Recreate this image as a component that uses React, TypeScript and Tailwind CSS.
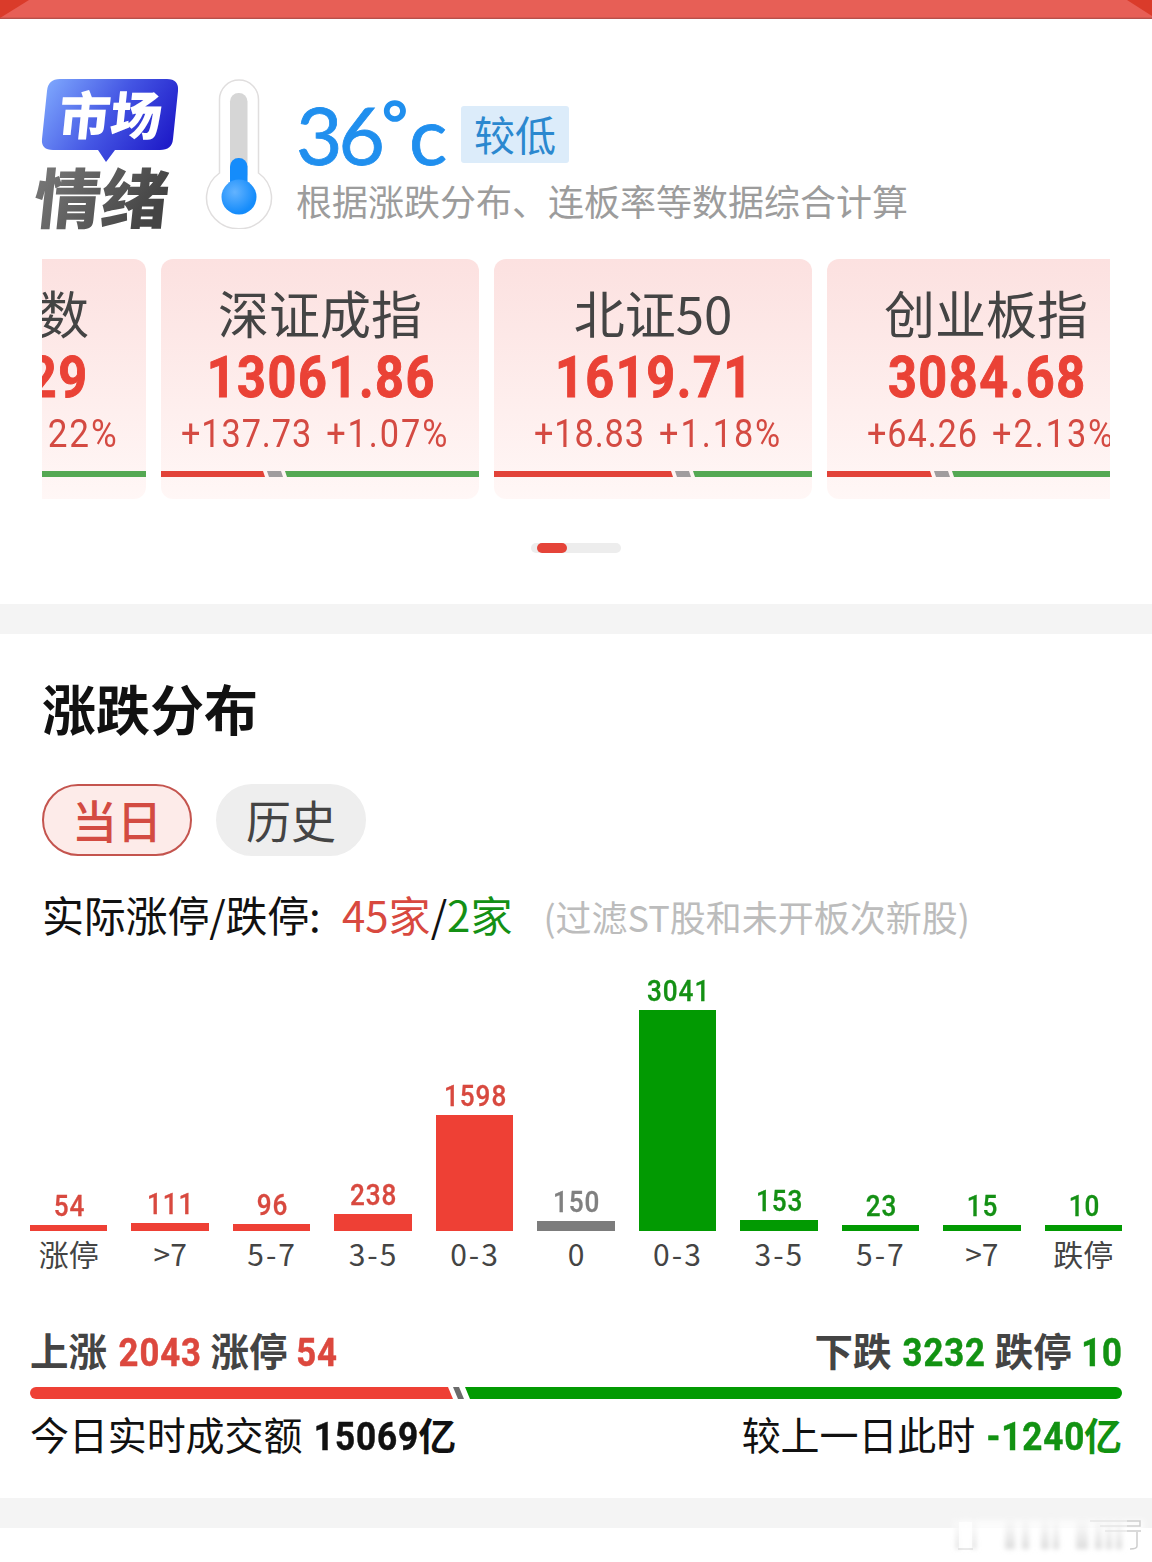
import React, { useState } from 'react';

interface IndexItem {
  name: string;
  price: string;
  change: string;
  percent: string;
  offset: string;
  red: number;
}

interface Bucket {
  label: string;
  count: number;
  height: number;
  type: 'up' | 'flat' | 'down';
}

const indexes: IndexItem[] = [
  { name: '深证成指', price: '13061.86', change: '+137.73', percent: '+1.07%', offset: 'pl-[20px]', red: 104 },
  { name: '北证50', price: '1619.71', change: '+18.83', percent: '+1.18%', offset: 'pl-[40px]', red: 179 },
  { name: '创业板指', price: '3084.68', change: '+64.26', percent: '+2.13%', offset: 'pl-[40px]', red: 105 },
];

const buckets: Bucket[] = [
  { label: '涨停', count: 54, height: 6, type: 'up' },
  { label: '>7', count: 111, height: 8, type: 'up' },
  { label: '5-7', count: 96, height: 7, type: 'up' },
  { label: '3-5', count: 238, height: 17, type: 'up' },
  { label: '0-3', count: 1598, height: 116, type: 'up' },
  { label: '0', count: 150, height: 10, type: 'flat' },
  { label: '0-3', count: 3041, height: 221, type: 'down' },
  { label: '3-5', count: 153, height: 11, type: 'down' },
  { label: '5-7', count: 23, height: 6, type: 'down' },
  { label: '>7', count: 15, height: 6, type: 'down' },
  { label: '跌停', count: 10, height: 6, type: 'down' },
];

const cardClass =
  'h-[240px] shrink-0 overflow-hidden bg-linear-to-b from-[#fce1e0] to-[#fff7f6] flex flex-col';

// Roboto squeezed to the proportions of a DIN face
const priceClass =
  'mt-[6px] h-[60px] font-[Roboto,sans-serif] text-[57.5px] leading-[60px] font-bold tracking-[1.8px] text-[#ea4236] [-webkit-text-stroke:1px_#ea4236]';
const changeClass =
  'mt-px h-[50px] font-[Roboto,sans-serif] text-[39px] leading-[51px] font-normal tracking-[1px] text-[#d44a42]';

const Banner: React.FC = () => (
  <svg className="block h-[19px] w-full" viewBox="0 0 1152 19">
    <rect width="1152" height="19" fill="#e75f56" />
    <path d="M0 0H29L0 18Z" fill="#da3b2a" />
    <path d="M1152 0H1127L1152 16Z" fill="#da3b2a" />
    <rect y="17.6" width="1152" height="1.4" fill="#b8504a" />
  </svg>
);

const Logo: React.FC = () => (
  <svg className="h-[150px] w-[150px] shrink-0 overflow-visible" viewBox="0 0 150 150">
    <defs>
      <linearGradient id="bubble" x1="0" y1="0.2" x2="1" y2="0.6">
        <stop offset="0" stopColor="#7ba3fc" />
        <stop offset="0.5" stopColor="#4557e4" />
        <stop offset="1" stopColor="#1f1cc9" />
      </linearGradient>
      <linearGradient id="ink" x1="0" y1="0" x2="1" y2="0.4">
        <stop offset="0" stopColor="#7d7d7d" />
        <stop offset="1" stopColor="#444444" />
      </linearGradient>
    </defs>
    <path
      d="M30 0H137Q149 0 148 12L143 60Q142 71 130 71H85L76 83L68 71H23Q11 71 12 60L17 12Q18 0 30 0Z"
      fill="url(#bubble)"
    />
    <g className="font-['Noto_Sans_CJK_SC',sans-serif] font-black">
      <text transform="translate(27 56) skewX(-6)" fontSize="52" fill="#fff" textLength="103" lengthAdjust="spacingAndGlyphs">市场</text>
      <text transform="translate(2 144) skewX(-6)" fontSize="65" fill="url(#ink)" textLength="134" lengthAdjust="spacingAndGlyphs">情绪</text>
    </g>
  </svg>
);

const Thermometer: React.FC = () => (
  <svg className="h-[150px] w-[68px] shrink-0" viewBox="0 0 68 150">
    <defs>
      <radialGradient id="bulb" cx="0.38" cy="0.36" r="0.6">
        <stop offset="0" stopColor="#63b3ff" />
        <stop offset="1" stopColor="#158cfb" />
      </radialGradient>
    </defs>
    <path
      d="M14.5 94V20.5A19.5 19.5 0 0 1 53.500 20.500V94A32.500 31 0 1 1 14.500 94Z"
      fill="#fff"
      stroke="#e0dede"
      strokeWidth="1.500"
    />
    <rect x="25" y="14" width="17.500" height="90" rx="8.500" fill="#d6d6d6" />
    <rect x="25" y="79" width="17.500" height="40" rx="8.500" fill="#158cfb" />
    <circle cx="34" cy="118" r="17.500" fill="url(#bulb)" />
  </svg>
);

const RatioBar: React.FC<{ red: number }> = ({ red }) => (
  <div className="flex h-[6px] w-full">
    <div className="bg-[#e24238] [clip-path:polygon(0_0,calc(100%-2px)_0,100%_100%,0_100%)]" style={{ width: red }}></div>
    <div className="ml-[2px] w-[16px] bg-[#a09c9e] [clip-path:polygon(0_0,calc(100%-2px)_0,100%_100%,2px_100%)]"></div>
    <div className="ml-[2px] flex-1 bg-[#55a853] [clip-path:polygon(0_0,100%_0,100%_100%,2px_100%)]"></div>
  </div>
);

const IndexCard: React.FC<{ item: IndexItem }> = ({ item }) => (
  <div className={`${cardClass} w-[318px] rounded-xl`}>
    <div className="mt-[23px] h-[60px] text-center text-[51px] leading-[60px] text-[#444]">{item.name}</div>
    <div className={`${priceClass} scale-x-[0.875] pl-[3px] text-center`}>{item.price}</div>
    <div className={`${changeClass} ${item.offset}`}>
      <div className="flex origin-left scale-x-[0.88] gap-[16px]">
        <span>{item.change}</span>
        <span className="tracking-[2.2px]">{item.percent}</span>
      </div>
    </div>
    <div className="mt-[12px]">
      <RatioBar red={item.red} />
    </div>
  </div>
);

const Distribution: React.FC = () => {
  const getTextColor = (type: Bucket['type']) => {
    switch (type) {
      case 'up': return 'text-[#d8493f]';
      case 'down': return 'text-[#149014]';
      default: return 'text-[#808080]';
    }
  };

  const getBarColor = (type: Bucket['type']) => {
    switch (type) {
      case 'up': return 'bg-[#ee4035]';
      case 'down': return 'bg-[#029a02]';
      default: return 'bg-[#7c7c7c]';
    }
  };

  return (
    <div className="mt-[25px] grid grid-cols-11 gap-6 px-[30px]">
      {buckets.map((bucket, index) => (
        <div key={index} className="flex flex-col">
          <div className="flex h-[261px] flex-col justify-end">
            <div className={`mb-[4px] scale-x-[0.9] pl-[2px] text-center font-[Roboto,sans-serif] text-[29px] leading-[30px] font-medium tracking-[1.1px] [-webkit-text-stroke:0.3px] ${getTextColor(bucket.type)}`}>
              {bucket.count}
            </div>
            <div className={getBarColor(bucket.type)} style={{ height: bucket.height }}></div>
          </div>
          <div className={`mt-[2px] h-[40px] text-center text-[30px] leading-[40px] whitespace-nowrap text-[#444] ${bucket.label.includes('-') ? 'pl-px tracking-[2px]' : ''}`}>
            {bucket.label}
          </div>
        </div>
      ))}
    </div>
  );
};

const Num: React.FC<{ className: string; children: React.ReactNode }> = ({ className, children }) => (
  <span className={`mr-[-3px] inline-block scale-x-[0.9] font-[Roboto,sans-serif] tracking-[1px] [-webkit-text-stroke:0.5px] ${className}`}>
    {children}
  </span>
);

const Watermark: React.FC = () => (
  <svg className="absolute right-0 bottom-0 h-[56px] w-[212px]" viewBox="0 0 212 56">
    <defs>
      <filter id="soft" x="-20%" y="-20%" width="140%" height="140%">
        <feGaussianBlur stdDeviation="2.600" />
      </filter>
      <linearGradient id="fade" x1="0" y1="0" x2="0" y2="1">
        <stop offset="0" stopColor="#ececec" stopOpacity="0" />
        <stop offset="1" stopColor="#dadada" />
      </linearGradient>
    </defs>
    <g filter="url(#soft)">
      <path d="M14 14H204V26H14Z" fill="#fff" opacity="0.7" />
      <path d="M16 8H20V43H16ZM32 8H36V43H32ZM65 14H75V43H65ZM82 14H89V43H82ZM101 12H109V43H101ZM113 12H119V43H113ZM136 14H148V43H136ZM155 14H162V43H155ZM166 14H172V43H166ZM176 14H182V43H176Z" fill="url(#fade)" />
    </g>
    <path d="M19 16H32V42H19Z" fill="#fff" opacity="0.8" />
    <path d="M18 43H33" stroke="#d4d4d4" />
    <path d="M150 15H187M160 20H187M165 25H187" stroke="#e2e2e2" strokeWidth="1.500" opacity="0.8" />
    <path d="M187 15H200V20H187M187 25H201M197 26V40Q197 43 190 43" fill="none" stroke="#cecece" strokeWidth="1.500" />
  </svg>
);

const App: React.FC = () => {
  const [tab, setTab] = useState('当日');

  const getTabClass = (name: string) =>
    name === tab
      ? 'border-2 border-[#c4544e] bg-[#fdebe9] font-medium text-[#d34b42]'
      : 'border-2 border-[#eeeeee] bg-[#eeeeee] text-[#444]';

  return (
    <div className="relative h-[1562px] w-[1152px] overflow-hidden bg-white font-['Noto_Sans_CJK_SC',sans-serif]">
      <Banner />

      {/* Market sentiment */}
      <section className="pt-[60px]">
        <div className="flex h-[150px] pl-[30px]">
          <Logo />
          <div className="ml-[25px]">
            <Thermometer />
          </div>
          <div className="ml-[23px]">
            <div className="mt-[27px] flex h-[57px] items-center">
              <div className="flex h-[57px] w-[165px] font-[Lato,sans-serif] text-[80px] leading-[56px] text-[#208fee] [-webkit-text-stroke:0.8px]">
                <span className="w-[86px] tracking-[-4px]">36</span>
                <span className="mt-[-12px] w-[27px] text-[62px] font-medium [-webkit-text-stroke:1.5px]">°</span>
                <span>c</span>
              </div>
              <div className="h-[57px] w-[108px] rounded-[3px] bg-[#dcecfa] text-center text-[41px] leading-[54px] text-[#2b88cf]">较低</div>
            </div>
            <div className="mt-[12px] h-[50px] text-[36px] leading-[50px] text-[#9c9c9c]">
              根据涨跌分布、连板率等数据综合计算
            </div>
          </div>
        </div>

        {/* Index carousel */}
        <div className="mx-[42px] mt-[30px] flex gap-[15px] overflow-hidden">
          <div className={`${cardClass} w-[104px] items-end rounded-r-xl`}>
            <div className="mt-[23px] mr-[57px] h-[60px] text-[51px] leading-[60px] text-[#444]">数</div>
            <div className={`${priceClass} mr-[57px] origin-right scale-x-[0.875]`}>29</div>
            <div className={`${changeClass} mr-[28px] origin-right scale-x-[0.9]`}>
              <span className="tracking-[2px]">22%</span>
            </div>
            <div className="mt-[12px] h-[6px] w-full bg-[#55a853]"></div>
          </div>
          {indexes.map((item) => (
            <IndexCard key={item.name} item={item} />
          ))}
        </div>

        <div className="mx-auto mt-[44px] h-[10px] w-[90px] rounded-full bg-[#ededed] pl-[6px]">
          <div className="h-[10px] w-[30px] rounded-full bg-[#e54439]"></div>
        </div>
      </section>

      <div className="mt-[51px] h-[30px] bg-[#f4f4f4]"></div>

      {/* Rise / fall distribution */}
      <section className="pt-[44px]">
        <h2 className="h-[60px] pl-[42px] text-[54px] leading-[60px] font-bold text-[#111]">涨跌分布</h2>

        <div className="mt-[46px] flex gap-6 pl-[42px]">
          {['当日', '历史'].map((name) => (
            <button
              key={name}
              onClick={() => setTab(name)}
              className={`h-[72px] w-[150px] rounded-full text-[45px] leading-[66px] ${getTabClass(name)}`}
            >
              {name}
            </button>
          ))}
        </div>

        <div className="mt-[28px] flex h-[60px] items-baseline pl-[42px] text-[42px] leading-[60px] whitespace-nowrap text-[#111]">
          <span className="w-[300px] tracking-[-0.2px]">实际涨停/跌停:</span>
          <span className="text-[#d8493f]">45家</span>
          <span>/</span>
          <span className="text-[#149014]">2家</span>
          <span className="ml-[31px] text-[36px] text-[#bcbcbc]">(过滤ST股和未开板次新股)</span>
        </div>

        <div className="pt-px">
          <Distribution />
        </div>

        <div className="mt-[51px] flex h-[50px] justify-between px-[30px] text-[38.5px] leading-[50px] font-bold text-[#444]">
          <div className="flex items-baseline gap-[7px]">
            <span>上涨</span>
            <Num className="text-[#dc483e]">2043</Num>
            <span>涨停</span>
            <Num className="text-[#dc483e]">54</Num>
          </div>
          <div className="flex items-baseline gap-[7px]">
            <span>下跌</span>
            <Num className="text-[#129212]">3232</Num>
            <span>跌停</span>
            <Num className="text-[#129212]">10</Num>
          </div>
        </div>

        <div className="mx-[30px] mt-[13px] flex h-[12px] overflow-hidden rounded-full">
          <div className="w-[423px] bg-[#ee4035] [clip-path:polygon(0_0,calc(100%-5px)_0,100%_100%,0_100%)]"></div>
          <div className="w-[11px] bg-[#6b6b6b] [clip-path:polygon(0_0,6px_0,100%_100%,5px_100%)]"></div>
          <div className="ml-[1px] flex-1 bg-[#029a02] [clip-path:polygon(0_0,100%_0,100%_100%,5px_100%)]"></div>
        </div>

        <div className="mt-[9px] flex h-[50px] justify-between px-[30px] text-[39px] leading-[50px] text-[#111]">
          <div className="flex items-baseline">
            <span className="tracking-[-0.1px]">今日实时成交额</span>
            <Num className="ml-[6px] font-bold">15069</Num>
            <span className="ml-[-4px] text-[38px] font-bold">亿</span>
          </div>
          <div className="flex items-baseline">
            <span className="tracking-[-0.1px]">较上一日此时</span>
            <Num className="ml-[6px] font-bold text-[#129212]">-1240</Num>
            <span className="ml-[-4px] text-[38px] font-bold text-[#129212]">亿</span>
          </div>
        </div>
      </section>

      <div className="mt-[40px] h-[30px] bg-[#f4f4f4]"></div>
      <Watermark />
    </div>
  );
};

export default App;
